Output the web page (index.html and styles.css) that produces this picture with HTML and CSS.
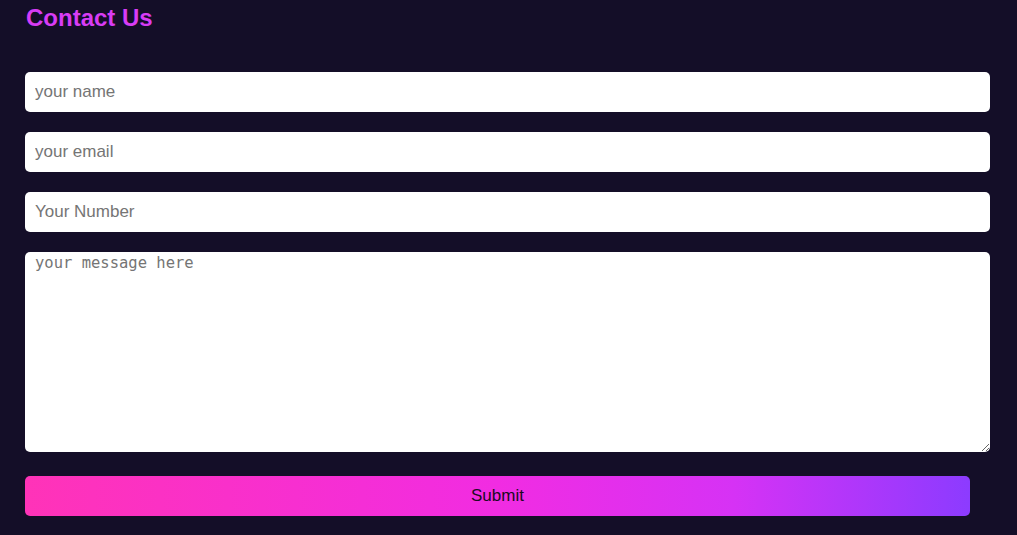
FILE: index.html
```html
<!DOCTYPE html>
<html lang="en">
<head>
<meta charset="utf-8">
<title>Contact Us</title>
<link rel="stylesheet" href="styles.css">
</head>
<body>
<section class="contact">
  <h2 class="title">Contact Us</h2>
  <form class="form">
    <input class="field" type="text" placeholder="your name">
    <input class="field" type="email" placeholder="your email">
    <input class="field" type="text" placeholder="Your Number">
    <textarea class="message" placeholder="your message here"></textarea>
    <button class="submit" type="button">Submit</button>
  </form>
</section>
</body>
</html>
```
FILE: styles.css
```css
html, body {
  margin: 0;
  padding: 0;
  background: #140e28;
  font-family: "Liberation Sans", Arial, sans-serif;
}
.contact {
  padding: 4px 27px 0 25px;
}
.title {
  margin: 0 0 40px 1px;
  font-size: 24px;
  line-height: 28px;
  font-weight: bold;
  color: #d83cf5;
}
.form {
  display: flex;
  flex-direction: column;
  gap: 20px;
}
.field, .message {
  box-sizing: border-box;
  width: 100%;
  border: none;
  border-radius: 5px;
  background: #fff;
  outline: none;
  margin: 0;
}
.field {
  height: 40px;
  padding: 0 10px;
  font-family: "Liberation Sans", Arial, sans-serif;
  font-size: 17px;
  color: #222;
}
.field::placeholder {
  color: #757575;
}
.message {
  height: 200px;
  padding: 2px 10px;
  font-family: "DejaVu Sans Mono", monospace;
  font-size: 15.5px;
  resize: vertical;
}
.message::placeholder {
  color: #757575;
}
.submit {
  box-sizing: border-box;
  width: calc(100% - 20px);
  height: 40px;
  margin-top: 4px;
  border: none;
  border-radius: 5px;
  background: linear-gradient(90deg, #ff33b8 0%, #f12ce2 50%, #d632f5 75%, #8c3bff 100%);
  font-family: "Liberation Sans", Arial, sans-serif;
  font-size: 17px;
  color: #1a0a22;
  cursor: pointer;
}
```
